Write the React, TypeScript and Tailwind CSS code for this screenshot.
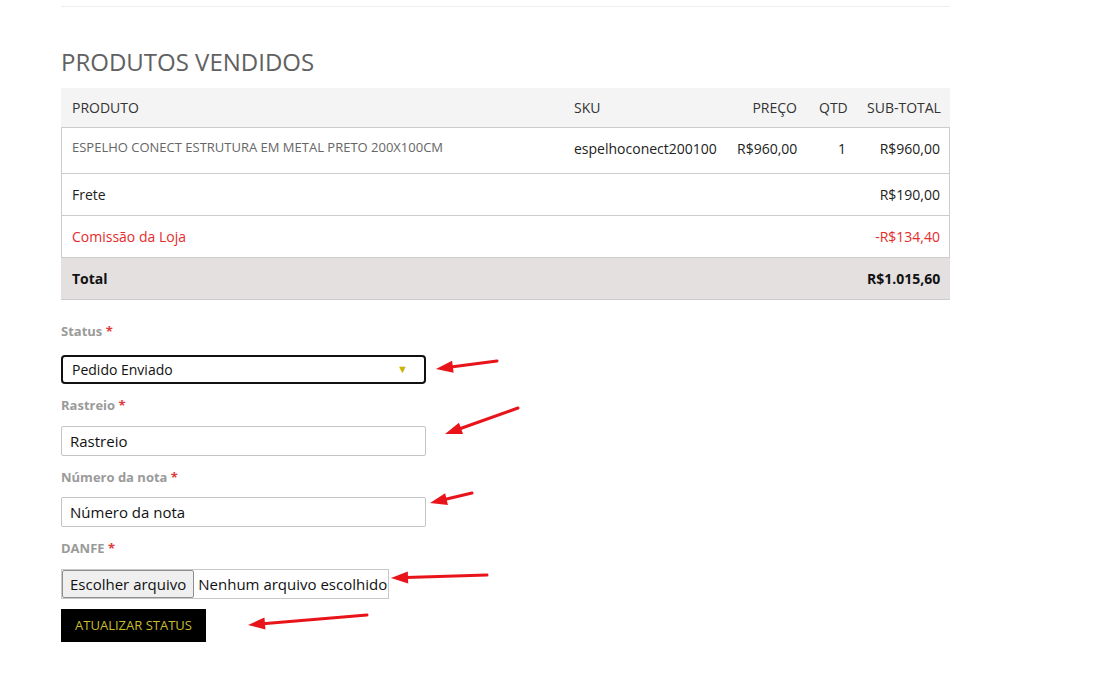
import React from 'react'

const cols = 'grid grid-cols-[502px_163px_82px_48px_94px]'

function Arrow({ x1, y1, x2, y2 }: { x1: number; y1: number; x2: number; y2: number }) {
  // tail (x1,y1) -> tip (x2,y2)
  const dx = x2 - x1
  const dy = y2 - y1
  const len = Math.hypot(dx, dy)
  const ux = dx / len
  const uy = dy / len
  const headLen = 17
  const headW = 6
  const bx = x2 - ux * headLen
  const by = y2 - uy * headLen
  const px = -uy * headW
  const py = ux * headW
  return (
    <g>
      <line x1={x1} y1={y1} x2={bx + ux * 2} y2={by + uy * 2} stroke="#e8141a" strokeWidth={3} strokeLinecap="round" />
      <polygon points={`${x2},${y2} ${bx + px},${by + py} ${bx - px},${by - py}`} fill="#e8141a" />
    </g>
  )
}

function Label({ children }: { children: React.ReactNode }) {
  return (
    <div className="text-[13px] leading-[20px] font-bold text-[#9a9a9a]">
      {children} <span className="text-[#e03a3a]">*</span>
    </div>
  )
}

export default function App() {
  return (
    <div className="relative min-h-screen w-full bg-white font-['Open_Sans',sans-serif] text-[#222]">
      <div className="ml-[61px] w-[889px] pt-[6px]">
        <div className="border-t border-[#eeeeee]" />

        <h2 className="mt-[40px] mb-[12px] text-[24px] leading-[29px] font-normal text-[#616161]">
          PRODUTOS VENDIDOS
        </h2>

        {/* tabela de produtos */}
        <div className="text-[14px] leading-[20px] whitespace-nowrap">
          <div className={`${cols} h-[40px] items-center bg-[#f4f4f4] border-b border-[#cccccc] text-[#333]`}>
            <div className="px-[11px]">PRODUTO</div>
            <div className="px-[11px]">SKU</div>
            <div className="px-[11px] text-right">PREÇO</div>
            <div className="px-[11px] text-right">QTD</div>
            <div className="px-[11px] text-right">SUB-TOTAL</div>
          </div>

          <div className={`${cols} h-[46px] items-start border-x border-b border-[#cccccc]`}>
            <div className="px-[10px] pt-[10px] text-[13px] leading-[18px] text-[#666]">
              ESPELHO CONECT ESTRUTURA EM METAL PRETO 200X100CM
            </div>
            <div className="px-[10px] pt-[11px]">espelhoconect200100</div>
            <div className="pl-[10px] pr-[12px] pt-[11px] text-right">R$960,00</div>
            <div className="px-[11px] pt-[11px] text-right">1</div>
            <div className="px-[11px] pt-[11px] text-right">R$960,00</div>
          </div>

          <div className={`${cols} h-[42px] items-center border-x border-b border-[#cccccc]`}>
            <div className="px-[10px]">Frete</div>
            <div />
            <div />
            <div />
            <div className="px-[11px] text-right">R$190,00</div>
          </div>

          <div className={`${cols} h-[42px] items-center border-x border-b border-[#cccccc] text-[#e52b2b]`}>
            <div className="px-[10px]">Comissão da Loja</div>
            <div />
            <div />
            <div />
            <div className="px-[11px] text-right">-R$134,40</div>
          </div>

          <div className={`${cols} h-[42px] items-center bg-[#e3e0df] border-b border-[#cccccc] font-bold text-[#111]`}>
            <div className="px-[11px]">Total</div>
            <div />
            <div />
            <div />
            <div className="px-[11px] text-right">R$1.015,60</div>
          </div>
        </div>

        {/* formulário de status */}
        <form className="mt-[21px] w-[365px]">
          <Label>Status</Label>
          <div className="mt-[14px] flex h-[29px] items-center justify-between rounded-[4px] border-2 border-[#111] pl-[9px] pr-[16px] text-[14px] text-[#111]">
            <span>Pedido Enviado</span>
            <span className="text-[11px] text-[#cbb400]">▼</span>
          </div>

          <div className="mt-[11px]">
            <Label>Rastreio</Label>
          </div>
          <div className="mt-[11px] flex h-[30px] items-center rounded-[2px] border border-[#c4c4c4] pl-[8px] text-[15px] text-[#111]">
            Rastreio
          </div>

          <div className="mt-[11px]">
            <Label>Número da nota</Label>
          </div>
          <div className="mt-[10px] flex h-[30px] items-center rounded-[2px] border border-[#c4c4c4] pl-[8px] text-[15px] text-[#111]">
            Número da nota
          </div>

          <div className="mt-[11px]">
            <Label>DANFE</Label>
          </div>
          <div className="mt-[11px] flex h-[30px] w-[328px] items-center border border-[#c8c8c8] text-[15px] text-[#111]">
            <span className="flex h-[28px] items-center rounded-[2px] border border-[#8f8f8f] bg-[#efefef] px-[7px] whitespace-nowrap">
              Escolher arquivo
            </span>
            <span className="ml-[4px] whitespace-nowrap">Nenhum arquivo escolhido</span>
          </div>

          <button
            type="button"
            className="mt-[10px] h-[33px] w-[145px] bg-black text-[13px] text-[#cbbd2c]"
          >
            ATUALIZAR STATUS
          </button>
        </form>
      </div>

      {/* setas de marcação */}
      <svg className="pointer-events-none absolute left-0 top-0" width={1108} height={692}>
        <Arrow x1={497} y1={361} x2={436} y2={369} />
        <Arrow x1={518} y1={408} x2={445} y2={434} />
        <Arrow x1={472} y1={493} x2={430} y2={503} />
        <Arrow x1={487} y1={575} x2={391} y2={578} />
        <Arrow x1={367} y1={615} x2={248} y2={625} />
      </svg>
    </div>
  )
}
